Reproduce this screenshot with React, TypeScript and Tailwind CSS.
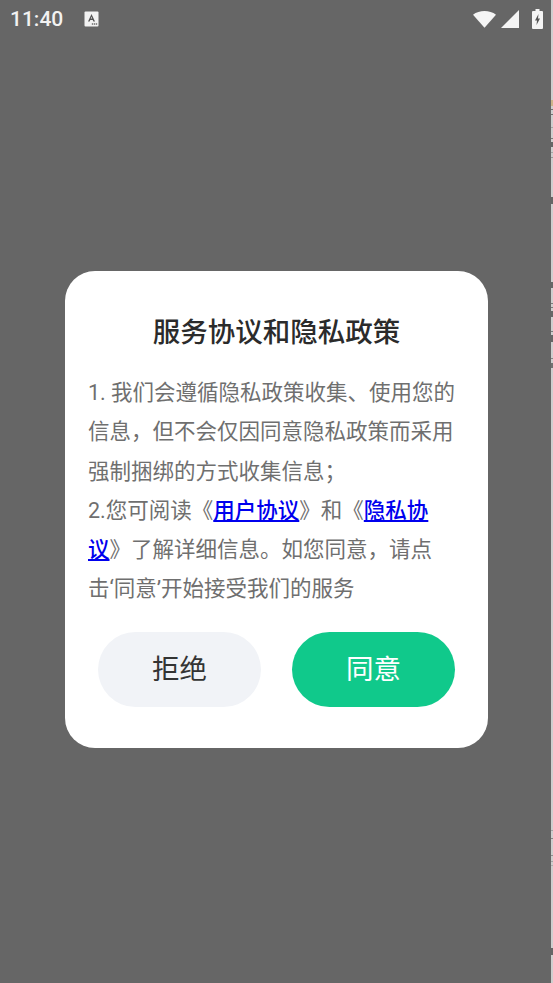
import React from 'react';

// bits of the page underneath that show along the right edge: [top, height, colour]
const edgeMarks: [number, number, string][] = [
  [100, 6, '#c9a25e'],
  [109, 1, '#333333'],
  [114, 1, '#333333'],
  [127, 1, '#8a8a8a'],
  [138, 1, '#444444'],
  [142, 5, '#222222'],
  [152, 1, '#8a8a8a'],
  [157, 1, '#777777'],
  [197, 7, '#222222'],
  [282, 6, '#222222'],
  [303, 1, '#444444'],
  [307, 1, '#444444'],
  [311, 6, '#222222'],
  [331, 1, '#444444'],
  [335, 7, '#222222'],
  [358, 1, '#555555'],
  [363, 5, '#333333'],
  [830, 1, '#888888'],
  [838, 1, '#555555'],
  [855, 1, '#666666'],
  [861, 1, '#888888'],
  [865, 1, '#999999'],
  [948, 7, '#222222'],
];

const App: React.FC = () => {
  return (
    <div className="relative w-[553px] h-[983px] overflow-hidden bg-[#666666] flex flex-col font-['Roboto','Noto_Sans_CJK_SC',sans-serif]">
      {/* status bar */}
      <div className="h-[38px] flex items-center justify-between pl-[10px] pr-[10px] text-white">
        <div className="flex items-center">
          <span className="text-[21px] leading-none font-medium text-[#f2f2f2]">11:40</span>
          <svg className="ml-[21px]" width="15" height="16" viewBox="0 0 15 16">
            <rect x="0.5" y="0.5" width="14" height="15" rx="1" fill="#f2f2f2" />
            <path d="M7.5 3 L11 10.5 H9.4 L8.7 9 H6.3 L5.6 10.5 H4 Z M7.5 5.8 L6.8 7.6 H8.2 Z" fill="#555555" fillRule="evenodd" />
            <circle cx="8.5" cy="13" r="0.8" fill="#555555" />
            <circle cx="10.5" cy="13" r="0.8" fill="#555555" />
            <circle cx="12.5" cy="13" r="0.8" fill="#555555" />
          </svg>
        </div>
        <div className="flex items-center gap-[5px]">
          <svg width="23" height="18" viewBox="0 0 24 18">
            <path d="M0 4.5 C6.5 -0.5 17.5 -0.5 24 4.5 L12 18 Z" fill="#f5f5f5" />
          </svg>
          <svg width="18" height="18" viewBox="0 0 18 18">
            <path d="M0 18 L18 0 V18 Z" fill="#f5f5f5" />
          </svg>
          <svg className="ml-[8px]" width="11" height="20" viewBox="0 0 11 20">
            <path d="M3.5 0 H7.5 V2 H10 A1 1 0 0 1 11 3 V19 A1 1 0 0 1 10 20 H1 A1 1 0 0 1 0 19 V3 A1 1 0 0 1 1 2 H3.5 Z" fill="#f5f5f5" />
            <path d="M6.5 5 L3 11.5 H5 L4.5 16 L8 9.5 H6 Z" fill="#555555" />
          </svg>
        </div>
      </div>

      {/* dialog */}
      <div className="flex-1 flex items-center justify-center pb-[2px]">
        <div className="w-[423px] h-[477px] bg-white rounded-[30px] px-[23px] flex flex-col">
          <h1 className="mt-[44px] text-center text-[27.5px] leading-[36px] font-medium text-[#2b2b2b]">服务协议和隐私政策</h1>
          <p className="mt-[22px] pr-[6px] text-[21.5px] leading-[39.3px] text-[#6f6f6f]">
            1. 我们会遵循隐私政策收集、使用您的信息，但不会仅因同意隐私政策而采用强制捆绑的方式收集信息；
            <br />
            2.您可阅读《<a className="text-[#0000ee] underline font-medium">用户协议</a>》和《<a className="text-[#0000ee] underline font-medium">隐私协议</a>》了解详细信息。如您同意，请点击‘同意’开始接受我们的服务
          </p>
          <div className="mt-[23px] flex justify-between px-[10px]">
            <button className="w-[163px] h-[75px] rounded-full bg-[#f1f3f7] text-[27.5px] text-[#333333]">拒绝</button>
            <button className="w-[163px] h-[75px] rounded-full bg-[#10c98b] text-[27.5px] text-white">同意</button>
          </div>
        </div>
      </div>

      {/* edge of the page underneath */}
      <div className="absolute top-0 right-0 w-[2px] h-full bg-[#cfcfcf]">
        {edgeMarks.map(([top, height, colour]) => (
          <div key={top} className="absolute left-0 w-full opacity-60" style={{ top, height, backgroundColor: colour }} />
        ))}
      </div>
    </div>
  );
};

export default App;
